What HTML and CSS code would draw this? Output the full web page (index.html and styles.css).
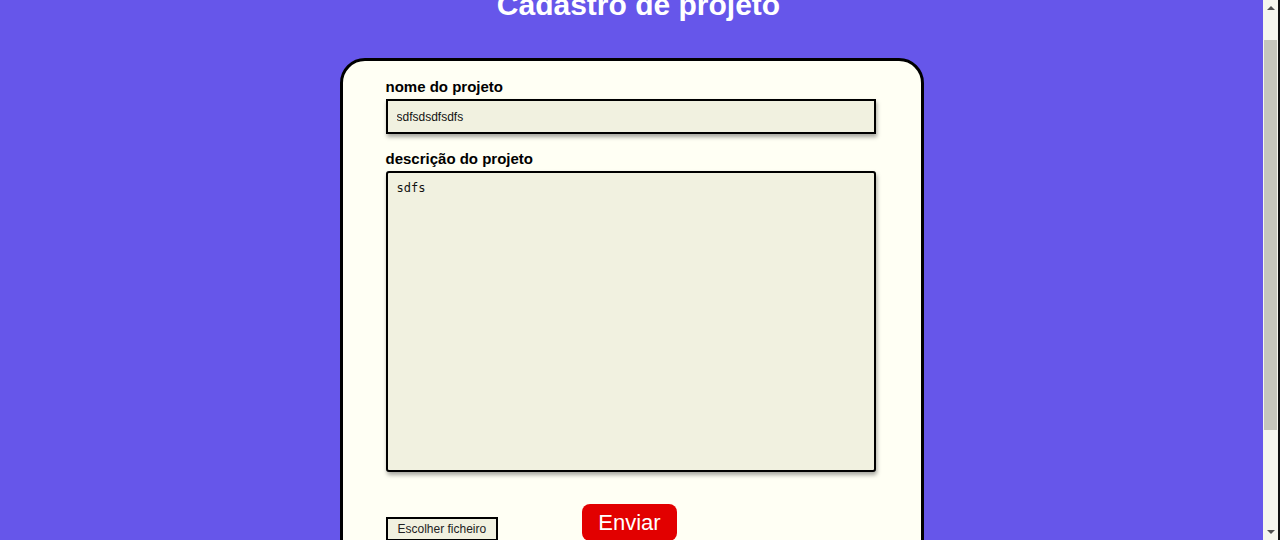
FILE: index.html
```html
<!DOCTYPE html>
<html lang="pt">
<head>
<meta charset="utf-8">
<title>Cadastro de projeto</title>
<link rel="stylesheet" href="styles.css">
</head>
<body>
<h1 class="title">Cadastro de projeto</h1>
<form class="card">
  <label class="field-label" for="nome">nome do projeto</label>
  <input class="text-input" id="nome" type="text" value="sdfsdsdfsdfs">
  <label class="field-label second" for="desc">descrição do projeto</label>
  <textarea class="text-area" id="desc">sdfs</textarea>
  <div class="actions">
    <label class="file-btn">Escolher ficheiro<input class="file-hidden" type="file"></label>
    <button class="submit-btn" type="button">Enviar</button>
  </div>
</form>
<div class="scrollbar" aria-hidden="true">
  <span class="arrow arrow-up"></span>
  <span class="thumb"></span>
  <span class="arrow arrow-down"></span>
</div>
<script src="script.js"></script>
</body>
</html>
```

FILE: styles.css
```css
html, body {
  margin: 0;
  padding: 0;
}
body {
  background: #6656ea;
  font-family: "Liberation Sans", Arial, sans-serif;
  padding: 0 17px 10px 0;
}
.title {
  margin: 20px 0 0;
  font-size: 30px;
  line-height: 34px;
  font-weight: bold;
  color: #ffffff;
  text-align: center;
  text-indent: 14px;
}
.card {
  display: flex;
  flex-direction: column;
  align-items: flex-start;
  box-sizing: border-box;
  width: 584px;
  margin: 36px auto 0;
  padding: 17px 43px 114px 43px;
  background: #fffff4;
  border: 3px solid #000;
  border-radius: 25px;
}
.field-label {
  display: block;
  font-size: 15px;
  line-height: 17px;
  font-weight: bold;
  color: #000;
  margin-bottom: 4px;
}
.field-label.second {
  margin-top: 16px;
}
.text-input {
  box-sizing: border-box;
  width: 490px;
  height: 35px;
  margin: 0;
  padding: 0 9px;
  border: 2px solid #000;
  border-radius: 0;
  background: #f1f1e0;
  font-family: "Liberation Sans", Arial, sans-serif;
  font-size: 12px;
  color: #111;
  box-shadow: 1px 3px 4px rgba(0, 0, 0, 0.35);
  outline: none;
}
.text-area {
  box-sizing: border-box;
  width: 490px;
  height: 301px;
  margin: 0;
  padding: 8px 9px;
  border: 2px solid #000;
  border-radius: 3px;
  background: #f1f1e0;
  font-family: "DejaVu Sans Mono", monospace;
  font-size: 12px;
  line-height: 14px;
  color: #111;
  resize: none;
  box-shadow: 1px 3px 4px rgba(0, 0, 0, 0.35);
  outline: none;
}
.actions {
  display: flex;
  align-items: flex-start;
  margin-top: 32px;
}
.file-btn {
  box-sizing: border-box;
  margin-top: 13px;
  height: 24px;
  padding: 0 10px;
  border: 2px solid #000;
  background: #f1f1e0;
  font-size: 12px;
  line-height: 20px;
  color: #222;
  white-space: nowrap;
}
.file-hidden {
  display: none;
}
.submit-btn {
  margin: 0 0 0 84px;
  padding: 5px 16px;
  border: none;
  border-radius: 8px;
  background: #e20000;
  color: #fff;
  font-family: "Liberation Sans", Arial, sans-serif;
  font-size: 22px;
  line-height: 27px;
}
.scrollbar {
  position: fixed;
  top: 0;
  right: 0;
  width: 15px;
  height: 100%;
  background: #f6f6ee;
  border-right: 2px solid #111;
}
.thumb {
  position: absolute;
  top: 40px;
  left: 1px;
  right: 1px;
  height: 390px;
  background: #c6c6bc;
}
.arrow {
  position: absolute;
  left: 4px;
  width: 0;
  height: 0;
  border-left: 4px solid transparent;
  border-right: 4px solid transparent;
}
.arrow-up {
  top: 6px;
  border-bottom: 4px solid #505050;
}
.arrow-down {
  bottom: 6px;
  border-top: 4px solid #505050;
}
```

FILE: script.js
```js
window.scrollTo(0, 32);
```
